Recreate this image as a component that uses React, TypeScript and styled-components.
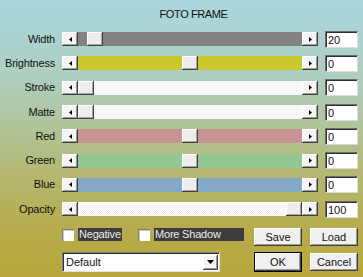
import styled, { createGlobalStyle } from "styled-components";

const Global = createGlobalStyle`
  body {
    margin: 0;
    font-family: "Liberation Sans", Arial, sans-serif;
    font-size: 11px;
    color: #111;
  }
`;

const Dialog = styled.div`
  width: 363px;
  height: 277px;
  box-sizing: border-box;
  padding-top: 8px;
  overflow: hidden;
  background: linear-gradient(
    to bottom,
    #a9d7df 0%,
    #adcfc4 25%,
    #b1c59c 45%,
    #b4b874 62%,
    #b7ac4c 82%,
    #b8a73a 100%
  );
`;

const Title = styled.div`
  padding-left: 24px;
  text-align: center;
  line-height: 13px;
  letter-spacing: -0.4px;
`;

const Rows = styled.div`
  display: grid;
  grid-template-columns: 55px 256px 33px;
  column-gap: 7px;
  grid-auto-rows: 24.3px;
  align-items: center;
  margin-top: 6px;
`;

const Label = styled.div`
  text-align: right;
  line-height: 13px;
  letter-spacing: -0.2px;
`;

const Slider = styled.div`
  display: flex;
  height: 14px;
`;

const raised = `
  background: #f4f4f4;
  box-shadow: inset -1px -1px #404040, inset 1px 1px #ffffff,
    inset -2px -2px #9a9a9a;
`;

const ArrowBtn = styled.div`
  flex: none;
  width: 16px;
  display: flex;
  align-items: center;
  justify-content: center;
  ${raised}
`;

const Track = styled.div<{ $bg: string; $dotted?: boolean }>`
  flex: 1;
  position: relative;
  background: ${(p) =>
    p.$dotted
      ? "repeating-conic-gradient(#ffffff 0 25%, #efefef 0 50%) 0 0 / 2px 2px"
      : p.$bg};
`;

const Thumb = styled.div`
  position: absolute;
  top: 0;
  width: 16px;
  height: 14px;
  box-sizing: border-box;
  background: #ededed;
  box-shadow: inset -1px -1px #404040, inset 1px 1px #ffffff,
    inset -2px -2px #a8a8a8;
`;

const ValueBox = styled.div`
  height: 17px;
  box-sizing: border-box;
  background: #fff;
  border-top: 1px solid #6c6c6c;
  border-left: 1px solid #6c6c6c;
  border-right: 1px solid #dcdcdc;
  border-bottom: 1px solid #dcdcdc;
  box-shadow: inset 1px 1px #303030;
  padding: 1px 0 0 2px;
  line-height: 14px;
`;

const Bottom = styled.div`
  display: grid;
  grid-template-columns: 184px 48px 48px;
  grid-template-rows: 17px 21px;
  column-gap: 8px;
  row-gap: 6px;
  align-items: center;
  padding-left: 62px;
  margin-top: 7px;
`;

const Checks = styled.div`
  display: flex;
  align-items: center;
  align-self: start;
`;

const CheckItem = styled.div`
  display: flex;
  align-items: center;
  gap: 4px;
  margin-right: 16px;
`;

const Box = styled.span`
  width: 12px;
  height: 12px;
  box-sizing: border-box;
  background: #fff;
  border-top: 1px solid #808080;
  border-left: 1px solid #808080;
  box-shadow: inset 1px 1px #c8c8c8;
`;

const CheckText = styled.span<{ $w: number }>`
  width: ${(p) => p.$w}px;
  height: 13px;
  box-sizing: border-box;
  padding-left: 1px;
  background: #3c3c3c;
  color: #ececec;
  line-height: 13px;
  letter-spacing: -0.2px;
  white-space: nowrap;
`;

const Button = styled.div<{ $default?: boolean }>`
  height: ${(p) => (p.$default ? 20 : 18)}px;
  box-sizing: border-box;
  display: flex;
  align-items: center;
  justify-content: center;
  ${raised}
  background: #f0f0f0;
  border: ${(p) => (p.$default ? "1px solid #000" : "none")};
`;

const Select = styled.div`
  width: 158px;
  height: 20px;
  box-sizing: border-box;
  display: flex;
  align-items: stretch;
  background: #fff;
  border-top: 1px solid #808080;
  border-left: 1px solid #808080;
  border-right: 1px solid #e0e0e0;
  border-bottom: 1px solid #e0e0e0;
  box-shadow: inset 1px 1px #303030;
  padding: 2px 1px 1px 2px;
`;

const SelectText = styled.div`
  flex: 1;
  padding-left: 1px;
  line-height: 15px;
`;

const SelectBtn = styled.div`
  width: 15px;
  display: flex;
  align-items: center;
  justify-content: center;
  ${raised}
`;

const Left = () => (
  <svg width="3" height="5" viewBox="0 0 3 5">
    <polygon points="3,0 0,2.5 3,5" fill="#000" />
  </svg>
);

const Right = () => (
  <svg width="3" height="5" viewBox="0 0 3 5">
    <polygon points="0,0 3,2.5 0,5" fill="#000" />
  </svg>
);

const Down = () => (
  <svg width="7" height="4" viewBox="0 0 7 4">
    <polygon points="0,0 7,0 3.5,4" fill="#000" />
  </svg>
);

const sliders = [
  { name: "Width", value: 20, min: 0, max: 450, color: "#838383" },
  { name: "Brightness", value: 0, min: -100, max: 100, color: "#cbc82e" },
  { name: "Stroke", value: 0, min: 0, max: 100, color: "", dotted: true },
  { name: "Matte", value: 0, min: 0, max: 100, color: "", dotted: true },
  { name: "Red", value: 0, min: -255, max: 255, color: "#c99393" },
  { name: "Green", value: 0, min: -255, max: 255, color: "#92c693" },
  { name: "Blue", value: 0, min: -255, max: 255, color: "#83a9c6" },
  { name: "Opacity", value: 100, min: 0, max: 100, color: "", dotted: true },
];

const App = () => {
  return (
    <Dialog>
      <Global />
      <Title>FOTO FRAME</Title>
      <Rows>
        {sliders.map((s) => {
          const frac = (s.value - s.min) / (s.max - s.min);
          return [
            <Label key={s.name + "l"}>{s.name}</Label>,
            <Slider key={s.name + "s"}>
              <ArrowBtn>
                <Left />
              </ArrowBtn>
              <Track $bg={s.color} $dotted={s.dotted}>
                <Thumb style={{ left: `calc((100% - 16px) * ${frac})` }} />
              </Track>
              <ArrowBtn>
                <Right />
              </ArrowBtn>
            </Slider>,
            <ValueBox key={s.name + "v"}>{s.value}</ValueBox>,
          ];
        })}
      </Rows>
      <Bottom>
        <Checks>
          <CheckItem>
            <Box />
            <CheckText $w={44}>Negative</CheckText>
          </CheckItem>
          <CheckItem>
            <Box />
            <CheckText $w={90}>More Shadow</CheckText>
          </CheckItem>
        </Checks>
        <Button>Save</Button>
        <Button>Load</Button>
        <Select>
          <SelectText>Default</SelectText>
          <SelectBtn>
            <Down />
          </SelectBtn>
        </Select>
        <Button $default>OK</Button>
        <Button>Cancel</Button>
      </Bottom>
    </Dialog>
  );
};

export default App;
